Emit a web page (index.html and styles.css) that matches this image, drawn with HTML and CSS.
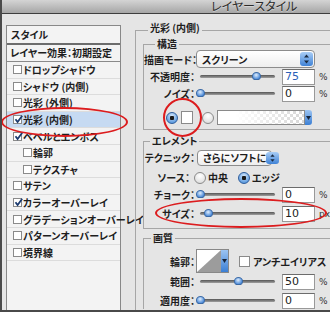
FILE: index.html
```html
<!DOCTYPE html>
<html>
<head>
    <meta charset="utf-8">
    <link rel="stylesheet" href="styles.css">
</head>
<body>
    <div class="window">
        <div class="titlebar">レイヤースタイル</div>

        <div class="content">
            <div class="style-list">
                <div class="list-head">スタイル</div>
                <div class="list-preset">レイヤー効果：初期設定</div>
                <div class="list-item"><span class="check"></span>ドロップシャドウ</div>
                <div class="list-item"><span class="check"></span>シャドウ (内側)</div>
                <div class="list-item"><span class="check"></span>光彩 (外側)</div>
                <div class="list-item selected"><span class="check on"><svg width="9" height="9" viewBox="0 0 9 9"><path d="M1.5 4.2 L3.6 7 L8.2 0.8" /></svg></span>光彩 (内側)</div>
                <div class="list-item"><span class="check on"><svg width="9" height="9" viewBox="0 0 9 9"><path d="M1.5 4.2 L3.6 7 L8.2 0.8" /></svg></span>ベベルとエンボス</div>
                <div class="list-item sub"><span class="check"></span>輪郭</div>
                <div class="list-item sub"><span class="check"></span>テクスチャ</div>
                <div class="list-item"><span class="check"></span>サテン</div>
                <div class="list-item"><span class="check on"><svg width="9" height="9" viewBox="0 0 9 9"><path d="M1.5 4.2 L3.6 7 L8.2 0.8" /></svg></span>カラーオーバーレイ</div>
                <div class="list-item"><span class="check"></span>グラデーションオーバーレイ</div>
                <div class="list-item"><span class="check"></span>パターンオーバーレイ</div>
                <div class="list-item"><span class="check"></span>境界線</div>
            </div>

            <div class="options">
                <fieldset class="group outer">
                    <legend>光彩 (内側)</legend>

                    <fieldset class="group structure">
                        <legend>構造</legend>
                        <div class="row tall">
                            <span class="label">描画モード：</span>
                            <div class="select wide">スクリーン<span class="stepper"><svg width="13" height="14" viewBox="0 0 13 14"><path d="M6.5 2.5 L9 5.5 L4 5.5 Z M6.5 11.5 L9 8.5 L4 8.5 Z" /></svg></span></div>
                        </div>
                        <div class="row">
                            <span class="label">不透明度：</span>
                            <div class="slider"><span class="knob" style="left: 75%"></span></div>
                            <div class="field active">75</div>
                            <span class="unit">%</span>
                        </div>
                        <div class="row">
                            <span class="label">ノイズ：</span>
                            <div class="slider"><span class="knob" style="left: 0%"></span></div>
                            <div class="field">0</div>
                            <span class="unit">%</span>
                        </div>
                        <div class="row colors">
                            <span class="radio on"></span>
                            <span class="swatch"></span>
                            <span class="radio second"></span>
                            <div class="gradient">
                                <span class="gradient-bar"></span>
                                <span class="drop"><svg width="7" height="15" viewBox="0 0 7 15"><path d="M1 6 L6 6 L3.5 10 Z" /></svg></span>
                            </div>
                        </div>
                    </fieldset>

                    <fieldset class="group element">
                        <legend>エレメント</legend>
                        <div class="row">
                            <span class="label">テクニック：</span>
                            <div class="select short">さらにソフトに<span class="stepper"><svg width="13" height="12" viewBox="0 0 13 14"><path d="M6.5 2.5 L9 5.5 L4 5.5 Z M6.5 11.5 L9 8.5 L4 8.5 Z" /></svg></span></div>
                        </div>
                        <div class="row source">
                            <span class="label">ソース：</span>
                            <span class="radio"></span>
                            <span class="radio-text">中央</span>
                            <span class="radio on"></span>
                            <span class="radio-text">エッジ</span>
                        </div>
                        <div class="row">
                            <span class="label">チョーク：</span>
                            <div class="slider"><span class="knob" style="left: 0%"></span></div>
                            <div class="field">0</div>
                            <span class="unit">%</span>
                        </div>
                        <div class="row size">
                            <span class="label">サイズ：</span>
                            <div class="slider"><span class="knob" style="left: 11%"></span></div>
                            <div class="field">10</div>
                            <span class="unit">px</span>
                        </div>
                    </fieldset>

                    <fieldset class="group quality">
                        <legend>画質</legend>
                        <div class="row contour-row">
                            <span class="label">輪郭：</span>
                            <div class="contour">
                                <svg class="curve" width="24" height="22" viewBox="0 0 24 22"><polygon points="0,22 24,22 24,0" /></svg>
                                <span class="drop"><svg width="7" height="22" viewBox="0 0 7 22"><path d="M1 9 L6 9 L3.5 13 Z" /></svg></span>
                            </div>
                            <span class="box"></span>
                            <span class="box-text">アンチエイリアス</span>
                        </div>
                        <div class="row">
                            <span class="label">範囲：</span>
                            <div class="slider"><span class="knob" style="left: 50%"></span></div>
                            <div class="field">50</div>
                            <span class="unit">%</span>
                        </div>
                        <div class="row last">
                            <span class="label">適用度：</span>
                            <div class="slider"><span class="knob" style="left: 0%"></span></div>
                            <div class="field">0</div>
                            <span class="unit">%</span>
                        </div>
                    </fieldset>
                </fieldset>
            </div>
        </div>

        <div class="mark mark-list"></div>
        <div class="mark mark-color"></div>
        <div class="mark mark-size"></div>
    </div>
</body>
</html>
```

FILE: styles.css
```css
* {
    box-sizing: border-box;
}

html {
    height: 312px;
    overflow: hidden;
}

body {
    margin: 0;
    width: 330px;
    height: 312px;
    overflow: hidden;
    background-color: #e5e5e5;
    font-family: 'Noto Sans CJK JP', sans-serif;
    font-size: 10px;
    font-feature-settings: "palt";
    color: #1e1e1e;
}

.window {
    position: relative;
    height: 312px;
    border-left: 2px solid #4a4a4a;
    border-bottom: 2px solid #4a4a4a;
    overflow: hidden;
}

.titlebar {
    height: 14px;
    padding-left: 209px;
    border-bottom: 1px solid #3e3e3e;
    background: linear-gradient(#d4d4d4, #a6a6a6);
    font-size: 12px;
    line-height: 11px;
    color: #2b2b2b;
    text-shadow: 0 1px 0 rgba(255, 255, 255, 0.4);
    white-space: nowrap;
}

.content {
    display: flex;
    align-items: flex-start;
    height: 297px;
    padding-left: 4px;
    overflow: hidden;
}

/* style list on the left */
.style-list {
    flex-shrink: 0;
    align-self: stretch;
    width: 115px;
    margin-top: 11px;
    border: 1px solid #888;
    border-bottom: none;
    background-color: #f3f3f3;
}

.list-head {
    height: 19px;
    padding-left: 4px;
    border-bottom: 2px solid #6c6c6c;
    font-weight: bold;
    line-height: 17px;
}

.list-preset {
    height: 17px;
    padding-left: 3px;
    border-bottom: 1px solid #8a8a8a;
    font-weight: bold;
    line-height: 16px;
    white-space: nowrap;
}

.list-item {
    display: flex;
    align-items: center;
    height: 16.6px;
    padding-left: 6px;
    border-bottom: 1px solid #dcdcdc;
    font-weight: bold;
    white-space: nowrap;
}

.list-item.sub {
    padding-left: 16px;
}

.list-item.selected {
    background-color: #c6daf2;
}

.check {
    flex-shrink: 0;
    position: relative;
    width: 9px;
    height: 9px;
    margin-right: 1px;
    border: 1px solid #8a8a8a;
    background-color: #fff;
}

.check svg {
    position: absolute;
    left: 0;
    top: -1px;
    overflow: visible;
}

.check path {
    fill: none;
    stroke: #1d3c70;
    stroke-width: 1.8;
}

/* options on the right */
.options {
    flex-shrink: 0;
    align-self: stretch;
    width: 240px;
    margin: 8px 0 0 14px;
}

.group {
    margin: 0;
    padding: 0;
    min-width: 0;
    border: 1px solid #a6a6a6;
    border-right: none;
}

.group legend {
    padding: 0 2px;
    font-weight: bold;
    line-height: 12px;
}

.outer {
    height: 100%;
    padding-left: 7px;
    border-bottom: none;
}

.outer > legend {
    margin-left: 5px;
    padding-bottom: 4px;
}

.structure legend {
    margin-left: 11px;
}

.element legend {
    margin-left: 6px;
}

.quality legend {
    margin-left: 7px;
}

.structure {
    padding: 0 0 3px;
}

.element {
    margin-top: 5px;
    padding: 2px 0 6px;
}

.quality {
    margin-top: 3px;
    padding-top: 5px;
    border-bottom: none;
}

.row {
    display: flex;
    align-items: center;
    height: 17px;
    white-space: nowrap;
}

.row.tall {
    height: 18px;
}

.row.colors {
    margin-top: 7px;
}

.row.source {
    margin-top: 3px;
}

.row.size {
    margin-top: 2px;
}

.row.contour-row {
    height: 24px;
}

.row.last {
    margin-top: 2px;
}

.label {
    flex-shrink: 0;
    width: 51px;
    text-align: right;
    font-weight: bold;
}

.source .label {
    width: 46px;
}

.select {
    display: flex;
    align-items: center;
    justify-content: space-between;
    height: 18px;
    margin-left: 1px;
    padding: 0 1px 0 5px;
    border: 1px solid #8c8c8c;
    border-radius: 4px;
    background: linear-gradient(#fff, #eeeeee);
    font-weight: bold;
}

.select.wide {
    width: 119px;
}

.select.short {
    width: 75px;
    height: 16px;
    margin-left: 2px;
}

.stepper {
    display: flex;
    width: 13px;
    height: 14px;
    border-radius: 3px;
    background: linear-gradient(#a9cdf5, #3f82d6);
}

.short .stepper {
    height: 12px;
}

.stepper path {
    fill: #1a2a40;
}

.slider {
    position: relative;
    flex-shrink: 0;
    width: 75px;
    height: 9px;
    margin-left: 5px;
}

.slider::before {
    content: '';
    position: absolute;
    left: 0;
    right: 0;
    top: 3px;
    height: 3px;
    border-radius: 2px;
    background: linear-gradient(#555, #a0a0a0);
}

.knob {
    position: absolute;
    top: 0;
    width: 9px;
    height: 8px;
    margin-left: -4px;
    border: 1px solid #3b6aa6;
    border-radius: 50% 50% 45% 45%;
    background: radial-gradient(circle at 45% 35%, #e0eefc, #4c8ad8 75%);
}

.field {
    flex-shrink: 0;
    width: 33px;
    height: 16px;
    margin-left: 7px;
    padding-left: 2px;
    border: 1px solid #999;
    border-top-color: #6c6c6c;
    background-color: #fff;
    font-family: 'DejaVu Sans', sans-serif;
    font-size: 11px;
    line-height: 14px;
    color: #222;
}

.field.active {
    color: #2a5fb8;
}

.unit {
    margin-left: 4px;
    font-family: 'DejaVu Sans', sans-serif;
    font-size: 9px;
    color: #333;
}

.radio {
    flex-shrink: 0;
    width: 12px;
    height: 12px;
    border: 1px solid #8a8a8a;
    border-radius: 50%;
    background: radial-gradient(circle at 50% 30%, #fff, #d6d6d6);
}

.radio.on {
    border-color: #2e5d9c;
    background: radial-gradient(circle, #1a1a1a 0 2px, transparent 2.5px),
                radial-gradient(circle at 50% 30%, #d4e7fb, #5a99de 80%);
}

.colors .radio.on {
    margin-left: 22px;
}

.radio.second {
    margin-left: 9px;
}

.swatch {
    flex-shrink: 0;
    width: 12px;
    height: 13px;
    margin-left: 3px;
    border: 1px solid #8a8a8a;
    background-color: #fff;
}

.gradient {
    display: flex;
    height: 15px;
    margin-left: 3px;
}

.gradient-bar {
    width: 88px;
    border: 1px solid #8a8a8a;
    background:
        linear-gradient(to right, #fff 20%, rgba(255, 255, 255, 0) 95%),
        repeating-conic-gradient(#d9d9d9 0 25%, #fff 0 50%) 0 0 / 6px 6px;
}

.drop {
    display: flex;
    width: 7px;
    border-radius: 0 3px 3px 0;
    background: linear-gradient(#9cc4f2, #3b7fd4);
}

.drop path {
    fill: #15243a;
}

.source .radio {
    margin-left: 4px;
}

.source .radio.on {
    margin-left: 10px;
}

.radio-text {
    margin-left: 2px;
    font-weight: bold;
}

.contour {
    display: flex;
    flex-shrink: 0;
    height: 24px;
    margin-left: 1px;
    border: 1px solid #888;
    background-color: #fff;
    overflow: hidden;
}

.curve {
    display: block;
}

.contour polygon {
    fill: #9c9c9c;
}

.contour .drop {
    border-radius: 0;
}

.box {
    flex-shrink: 0;
    width: 11px;
    height: 11px;
    margin-left: 10px;
    border: 1px solid #8a8a8a;
    background-color: #fff;
}

.box-text {
    margin-left: 3px;
    font-weight: bold;
}

/* red annotation rings */
.mark {
    position: absolute;
    border: 2px solid #dc1c1e;
    border-radius: 50%;
}

.mark-list {
    left: -1px;
    top: 107px;
    width: 127px;
    height: 30px;
}

.mark-color {
    left: 161px;
    top: 98px;
    width: 39px;
    height: 39px;
}

.mark-size {
    left: 153px;
    top: 198px;
    width: 172px;
    height: 30px;
}
```
